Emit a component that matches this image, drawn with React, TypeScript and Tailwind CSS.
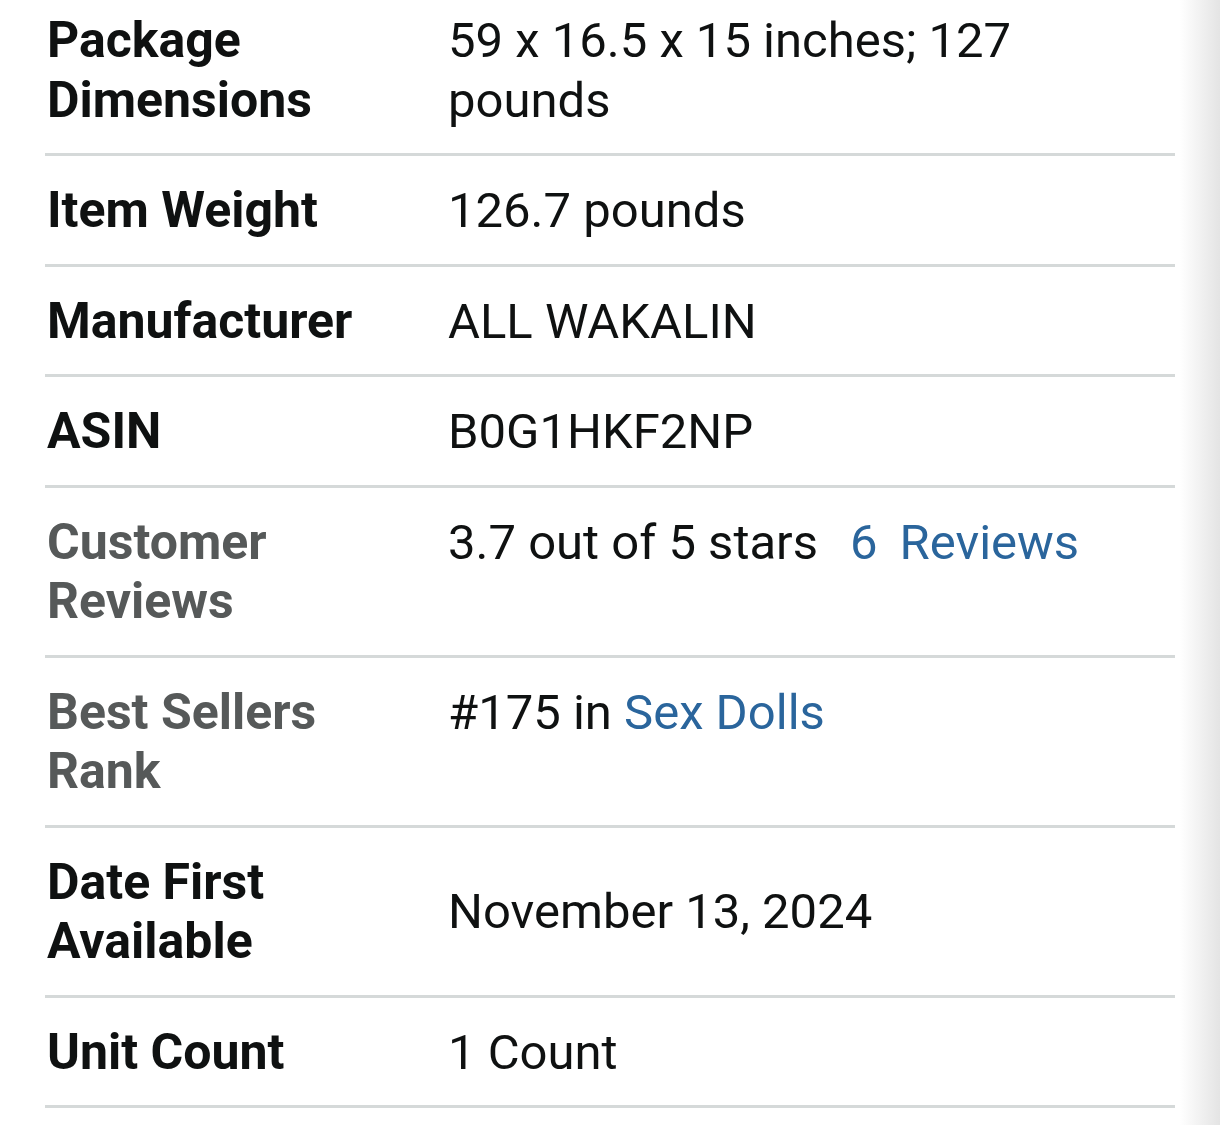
import React from "react";

type Row = {
  label: string[];
  muted?: boolean;
  value: React.ReactNode;
  middle?: boolean;
};

const rows: Row[] = [
  { label: ["Package", "Dimensions"], value: <>59 x 16.5 x 15 inches; 127<br />pounds</> },
  { label: ["Item Weight"], value: "126.7 pounds" },
  { label: ["Manufacturer"], value: "ALL WAKALIN" },
  { label: ["ASIN"], value: "B0G1HKF2NP" },
  {
    label: ["Customer", "Reviews"],
    muted: true,
    value: (
      <>
        3.7 out of 5 stars
        <span className="ml-[32px] text-[#2a659c]">6</span>
        <span className="ml-[22px] text-[#2a659c]">Reviews</span>
      </>
    ),
  },
  {
    label: ["Best Sellers", "Rank"],
    muted: true,
    value: (
      <>
        #175 in <span className="text-[#2a659c]">Sex Dolls</span>
      </>
    ),
  },
  { label: ["Date First", "Available"], value: "November 13, 2024", middle: true },
  { label: ["Unit Count"], value: "1 Count" },
];

export default function App() {
  return (
    <div
      className="relative w-[1220px] h-[1125px] overflow-hidden bg-white"
      style={{ fontFamily: "Roboto, 'Liberation Sans', sans-serif" }}
    >
      <div className="absolute top-0 right-0 h-full w-[40px] bg-gradient-to-r from-white to-[#e4e4e4]" />
      <div className="ml-[45px] w-[1130px] -mt-[14px]">
        {rows.map((r, i) => (
          <div key={i} className="flex border-b-[3px] border-[#d5d9d9] pt-[25px] pb-[23px] text-[49px] leading-[59.5px]">
            <div
              className={`w-[403px] shrink-0 pl-[2px] font-bold text-[50px] ${r.muted ? "text-[#565959]" : "text-[#0f1111]"}`}
            >
              {r.label.map((l, j) => (
                <div key={j}>{l}</div>
              ))}
            </div>
            <div className={`flex-1 text-[#0f1111] ${r.middle ? "self-center" : ""}`}>{r.value}</div>
          </div>
        ))}
      </div>
    </div>
  );
}
